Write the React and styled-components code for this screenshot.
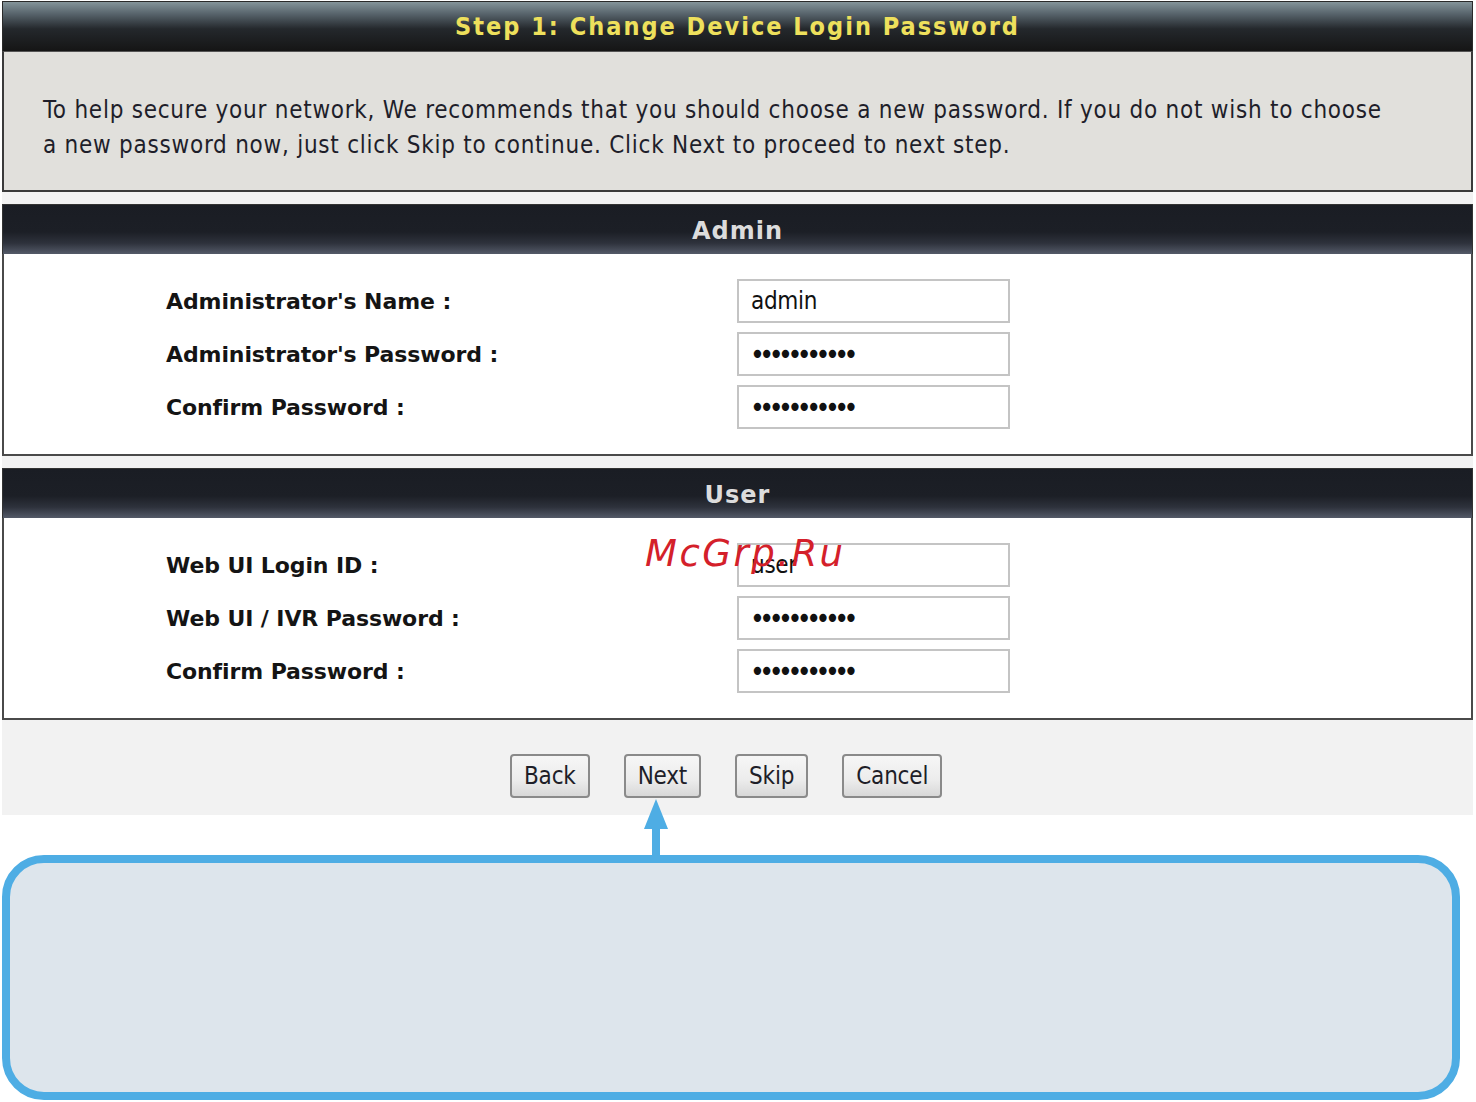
import React from "react";
import styled, { createGlobalStyle } from "styled-components";

const GlobalStyle = createGlobalStyle`
  html, body {
    margin: 0;
    padding: 0;
    background: #ffffff;
  }
  body {
    font-family: "DejaVu Sans Condensed", "DejaVu Sans", sans-serif;
  }
`;

const adminFields = [
  { label: "Administrator's Name :", value: "admin" },
  { label: "Administrator's Password :", value: "•••••••••••", secret: true },
  { label: "Confirm Password :", value: "•••••••••••", secret: true },
];

const userFields = [
  { label: "Web UI Login ID :", value: "user" },
  { label: "Web UI / IVR Password :", value: "•••••••••••", secret: true },
  { label: "Confirm Password :", value: "•••••••••••", secret: true },
];

export default function App() {
  return (
    <Page>
      <GlobalStyle />
      <Wizard>
        <TitleBar>Step 1: Change Device Login Password</TitleBar>
        <Intro>
          To help secure your network, We recommends that you should choose a new password. If you do not wish to choose
          <br />
          a new password now, just click Skip to continue. Click Next to proceed to next step.
        </Intro>
        <Spacer />
        <Section title="Admin" fields={adminFields} />
        <Spacer />
        <Section title="User" fields={userFields} />
        <ButtonBar>
          <Button>Back</Button>
          <Button>Next</Button>
          <Button>Skip</Button>
          <Button>Cancel</Button>
        </ButtonBar>
        <Watermark>McGrp.Ru</Watermark>
      </Wizard>
      <Connector>
        <ArrowSvg width="28" height="56" viewBox="0 0 28 56">
          <polygon points="14,0 26,30 2,30" fill="#4eade4" />
          <rect x="10" y="28" width="8" height="28" fill="#4eade4" />
        </ArrowSvg>
      </Connector>
      <Callout />
    </Page>
  );
}

function Section({ title, fields }) {
  return (
    <>
      <SectionHeader>{title}</SectionHeader>
      <SectionBody>
        {fields.map((f) => (
          <FieldRow key={f.label}>
            <Label>{f.label}</Label>
            <InputBox secret={f.secret}>{f.value}</InputBox>
          </FieldRow>
        ))}
      </SectionBody>
    </>
  );
}

const Page = styled.div`
  width: 1476px;
  padding-top: 1px;
`;

const Wizard = styled.div`
  position: relative;
  margin: 0 3px 0 2px;
  background: #f2f2f2;
`;

const TitleBar = styled.div`
  height: 49px;
  display: flex;
  align-items: center;
  justify-content: center;
  border: 1px solid #2a2a2a;
  border-bottom: none;
  background: linear-gradient(
    to bottom,
    #84949a 0%,
    #56626a 25%,
    #24282c 55%,
    #151515 100%
  );
  color: #eee05c;
  font-family: "DejaVu Sans Condensed", "DejaVu Sans", sans-serif;
  font-weight: bold;
  font-size: 25px;
  letter-spacing: 2px;
`;

const Intro = styled.div`
  height: 141px;
  box-sizing: border-box;
  padding: 41px 0 0 39px;
  background: #e1e0dc;
  border: 2px solid #3a3a3a;
  border-top: 1px solid #555;
  color: #1e1e2a;
  font-size: 24px;
  line-height: 35px;
  letter-spacing: 0.75px;
  white-space: nowrap;
`;

const Spacer = styled.div`
  height: 12px;
  background: #f2f2f2;
`;

const SectionHeader = styled.div`
  height: 50px;
  display: flex;
  align-items: center;
  justify-content: center;
  border: 1px solid #333;
  border-bottom: none;
  background: linear-gradient(
    to bottom,
    #1a1d24 0%,
    #1c1f26 55%,
    #2e323c 78%,
    #545a68 100%
  );
  color: #dcdcdc;
  font-family: "DejaVu Sans", sans-serif;
  font-weight: bold;
  font-size: 24px;
  letter-spacing: 1px;
  padding-top: 3px;
  box-sizing: border-box;
`;

const SectionBody = styled.div`
  background: #ffffff;
  border: 2px solid #4a4a4a;
  border-top: none;
  padding: 25px 0 25px 162px;
  display: flex;
  flex-direction: column;
  gap: 9px;
`;

const FieldRow = styled.div`
  display: grid;
  grid-template-columns: 571px 273px;
  align-items: center;
`;

const Label = styled.div`
  font-family: "DejaVu Sans", sans-serif;
  font-weight: bold;
  font-size: 22px;
  color: #141414;
  letter-spacing: -0.1px;
`;

const InputBox = styled.div`
  height: 44px;
  box-sizing: border-box;
  border: 2px solid #c4c4c4;
  background: #fff;
  display: flex;
  align-items: center;
  padding-left: ${(p) => (p.secret ? "11px" : "12px")};
  font-size: ${(p) => (p.secret ? "28px" : "24px")};
  letter-spacing: ${(p) => (p.secret ? "-5.5px" : "-0.3px")};
  color: #111;
`;

const ButtonBar = styled.div`
  height: 95px;
  box-sizing: border-box;
  padding: 34px 0 0 508px;
  display: flex;
  align-items: flex-start;
  gap: 34px;
  background: #f2f2f2;
`;

const Button = styled.button`
  height: 44px;
  padding: 0 12px;
  border: 2px solid #8a8a8a;
  border-radius: 4px;
  background: linear-gradient(to bottom, #f6f6f6 0%, #ececec 60%, #d8d8d8 100%);
  font-family: "DejaVu Sans Condensed", "DejaVu Sans", sans-serif;
  font-size: 24px;
  color: #1e1e28;
  letter-spacing: -0.2px;
`;

const Watermark = styled.div`
  position: absolute;
  left: 643px;
  top: 531px;
  font-family: "DejaVu Sans", sans-serif;
  font-style: italic;
  font-size: 37px;
  letter-spacing: 2.5px;
  color: #d4202a;
`;

const Connector = styled.div`
  position: relative;
  height: 40px;
  background: #fff;
`;

const ArrowSvg = styled.svg`
  position: absolute;
  left: 642px;
  top: -16px;
  display: block;
`;

const Callout = styled.div`
  margin: 0 16px 2px 2px;
  height: 245px;
  box-sizing: border-box;
  border: 8px solid #4eade4;
  border-radius: 42px;
  background: #dde5ec;
`;
